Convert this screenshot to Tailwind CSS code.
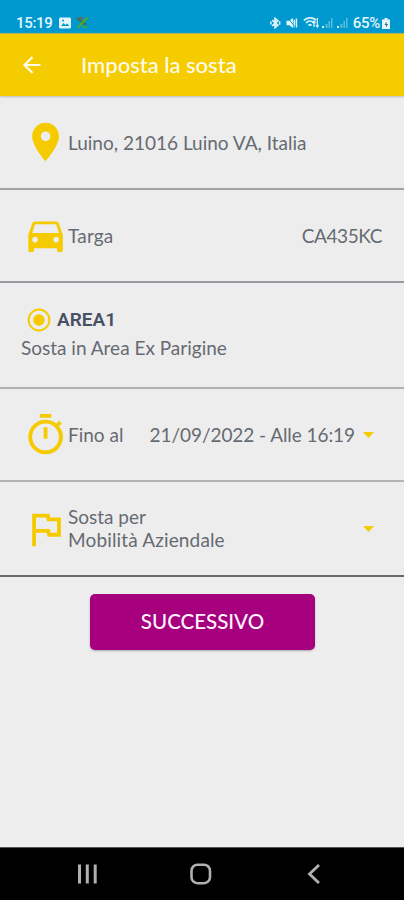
<!DOCTYPE html>
<html lang="it">
<head>
<meta charset="utf-8">
<meta name="viewport" content="width=device-width, initial-scale=1">
<title>Imposta la sosta</title>
<script src="https://cdn.jsdelivr.net/npm/@tailwindcss/browser@4"></script>
</head>
<body class="bg-[#ededed]">
<div class="flex h-[900px] w-[404px] flex-col overflow-hidden bg-[#ededed] font-['Lato',sans-serif] text-[19px] leading-[23px] text-[#666a72]">
  <div class="flex h-[33px] shrink-0 items-end bg-[#0099cf] pr-[14px] pb-[1px] pl-[16px] font-['Roboto',sans-serif] text-[15px] leading-[18px] font-medium text-[#e4f6fb]">
    <span class="tracking-[-0.3px]">15:19</span>
    <svg class="mb-[3px] ml-[6px] h-[12px] w-[12px]" viewBox="0 0 12 12"><rect y=".5" width="12" height="11" rx="1.5" fill="#e4f6fb"/><path d="M2 9l2.500-3 2 2 1.500-1.500L10.500 9z" fill="#0099cf"/><circle cx="4" cy="3.500" r="1" fill="#0099cf"/></svg>
    <svg class="mb-[3px] ml-[5px] h-[13px] w-[13px]" viewBox="0 0 13 13" fill="none" stroke-width="2.400"><path d="M1 2.500l5 3L10 9" stroke="#4a6d50"/><path d="M12 1.500L8 5 5 8l-3 4" stroke="#45a83b"/><path d="M3 2h4" stroke="#8b5347" stroke-width="1.600"/><path d="M6.500 11h4.500" stroke="#45a83b" stroke-width="1.800"/></svg>
    <div class="flex-1"></div>
    <svg class="mb-[3px] h-[12px] w-[11px]" viewBox="0 0 11 13" fill="none" stroke="#e4f6fb" stroke-width="1.800"><path d="M2 3.500l6 5.500-3 2.500V1.500L8 4 2 9.500"/><path d="M.5 5v3M10 4.500v4" stroke-width="1.600"/></svg>
    <svg class="mb-[3px] ml-[5px] h-[12px] w-[12px]" viewBox="0 0 12 13"><path d="M0 4h3l4-3v11L3 9H0z" fill="#e4f6fb"/><path d="M8.500 3v8M10.800 1.500v10" stroke="#e4f6fb" stroke-width="1.600"/><path d="M1 1l9 10" stroke="#0099cf" stroke-width="1"/></svg>
    <svg class="mb-[3px] ml-[5px] h-[13px] w-[16px]" viewBox="0 0 16 13" fill="none" stroke="#d6f0f7" stroke-width="1.700"><path d="M.8 4.500C4 1 9.500 1 13 4M3 7c2.500-2.500 5.500-2.500 7.500-.5M5.500 9.500c1-1 2-1 3 0"/><path d="M11 11V5m-1.500 2L11 5l1.500 2M14.300 2v9M13 9l1.300 2L15.600 9" stroke-width="1.300"/></svg>
    <svg class="mb-[3px] ml-[2px] h-[12px] w-[12px]" viewBox="0 0 12 12"><path d="M1 9h2v2H1z" fill="#d6f0f7"/><path d="M4.500 7h2v4h-2zM7.500 4h1.500v7H7.500zM10 1h1.500v10H10z" fill="#58bce0"/></svg>
    <svg class="mb-[3px] ml-[3px] h-[12px] w-[12px]" viewBox="0 0 12 12"><path d="M1 9h2v2H1z" fill="#d6f0f7"/><path d="M4.500 7h2v4h-2zM7.500 4h1.500v7H7.500zM10 1h1.500v10H10z" fill="#58bce0"/></svg>
    <span class="ml-[5px] tracking-[-0.300px]">65%</span>
    <svg class="mb-[3px] ml-[2px] h-[11px] w-[8px]" viewBox="0 0 8 11"><path d="M2.500 0h3v1.500H8V11H0V1.500h2.500z" fill="#e4f6fb"/><path d="M4.500 3.500L2.500 7h1.500v2.500L6 6H4.500z" fill="#32718c"/></svg>
  </div>

  <header class="flex h-[63px] shrink-0 items-center border-t border-[#a8b35a] bg-[#f5cc00] pl-[20px] text-white shadow-[0_1px_2px_#bbbbbb]">
    <svg class="h-[24px] w-[24px]" viewBox="0 0 24 24" fill="none" stroke="#fffbea" stroke-width="2.200"><path d="M20.500 12H4.500M12.500 4l-8 8 8 8"/></svg>
    <h1 class="ml-[37px] text-[22px] leading-[28px] font-medium text-[#fffbea]"><span>Imposta la sosta</span></h1>
  </header>

  <section class="flex h-[94px] shrink-0 items-center border-b-2 border-[#a0a2a5] pl-[22px]">
    <svg class="h-[46px] w-[46px]" viewBox="-.3 0 24 24" fill="#f5cb00"><path d="M12 2C8.130 2 5 5.130 5 9c0 5.250 7 13 7 13s7-7.750 7-13c0-3.870-3.130-7-7-7zm0 9.500a2.500 2.500 0 1 1 0-5 2.500 2.500 0 0 1 0 5z"/></svg>
    <span>Luino, 21016 Luino VA, Italia</span>
  </section>

  <section class="flex h-[93px] shrink-0 items-center border-b-2 border-[#96999d] pr-[22px] pl-[22px]">
    <svg class="h-[46px] w-[46px]" viewBox="-.3 -.4 24 24" fill="#f5cb00"><path d="M18.920 5.010C18.720 4.420 18.160 4 17.500 4h-11c-.66 0-1.210.42-1.420 1.010L3 11v8c0 .55.45 1 1 1h1c.55 0 1-.45 1-1v-1h12v1c0 .55.45 1 1 1h1c.55 0 1-.45 1-1v-8l-2.080-5.990zM6.500 15c-.83 0-1.500-.67-1.500-1.500S5.670 12 6.500 12s1.500.67 1.500 1.500S7.330 15 6.500 15zm11 0c-.83 0-1.500-.67-1.500-1.500s.67-1.500 1.500-1.500 1.500.67 1.500 1.500-.67 1.500-1.500 1.500zM5 10l1.500-4.500h11L19 10H5z"/></svg>
    <span class="tracking-[0.2px]">Targa</span>
    <span class="ml-auto tracking-[-0.4px]">CA435KC</span>
  </section>

  <section class="h-[106px] shrink-0 border-b-2 border-[#aeb0b2] pt-[24px] pl-[21px]">
    <div class="flex items-center pl-[6px]">
      <svg class="h-[24px] w-[24px]" viewBox="0 0 24 24"><circle cx="12" cy="12" r="10.400" fill="none" stroke="#f5cb00" stroke-width="2"/><circle cx="12" cy="12" r="5.800" fill="#f5cb00"/></svg>
      <span class="ml-[6px] font-['Roboto',sans-serif] text-[19px] leading-[26px] font-semibold text-[#485064]">AREA1</span>
    </div>
    <p class="mt-[3px]"><span>Sosta in Area Ex Parigine</span></p>
  </section>

  <section class="flex h-[93px] shrink-0 items-center border-b-2 border-[#b2b3b5] pr-[30px] pl-[22px]">
    <svg class="h-[46px] w-[46px]" viewBox="-.3 0 24 24" fill="#f5cb00"><path d="M15 1H9v2h6V1zm-4 13h2V8h-2v6zm8.030-6.610l1.420-1.420c-.43-.51-.9-.99-1.410-1.410l-1.420 1.420A8.962 8.962 0 0 0 12 4c-4.970 0-9 4.030-9 9s4.020 9 9 9a8.994 8.994 0 0 0 7.030-14.610zM12 20c-3.870 0-7-3.130-7-7s3.130-7 7-7 7 3.130 7 7-3.130 7-7 7z"/></svg>
    <span>Fino al</span>
    <span class="ml-auto tracking-[-0.07px]">21/09/2022 - Alle 16:19</span>
    <svg class="ml-[8px] h-[6px] w-[11px]" viewBox="0 0 11 6"><path d="M0 0h11L5.500 6z" fill="#f5cb00"/></svg>
  </section>

  <section class="flex h-[95px] shrink-0 items-center border-b-2 border-[#67696c] pr-[30px] pl-[22px]">
    <svg class="h-[46px] w-[46px]" viewBox="-.3 0 24 24" fill="#f5cb00"><path d="M12.360 6l.4 2H18v6h-3.360l-.4-2H7V6h5.360M14 4H5v17h2v-7h5.600l.4 2h7V6h-5.600L14 4z"/></svg>
    <div class="pb-[2px]"><span>Sosta per</span><br><span class="tracking-[0.150px]">Mobilità Aziendale</span></div>
    <svg class="ml-auto h-[6px] w-[11px]" viewBox="0 0 11 6"><path d="M0 0h11L5.500 6z" fill="#f5cb00"/></svg>
  </section>

  <button class="mt-[17px] ml-[90px] h-[56px] w-[225px] shrink-0 rounded-[5px] bg-[#a6007f] pb-[2px] text-[20.5px] font-medium text-[#fff4fc] shadow-[0_1px_2px_#aaaaaa]"><span>SUCCESSIVO</span></button>

  <nav class="mt-auto flex h-[53px] shrink-0 items-center border-t border-[#555555] bg-black pl-[77px]">
    <svg class="h-[20px] w-[20px]" viewBox="0 0 20 20" stroke="#b0b0b0" stroke-width="3"><path d="M2.500.5v19M10.300 .5v19M18.200 .5v19"/></svg>
    <svg class="ml-[93px] h-[22px] w-[22px]" viewBox="0 0 22 22"><rect x="1.500" y="1.700" width="18.500" height="18.500" rx="6" fill="none" stroke="#b0b0b0" stroke-width="2.600"/></svg>
    <svg class="ml-[95px] h-[20px] w-[14px]" viewBox="0 0 14 20" fill="none" stroke="#b0b0b0" stroke-width="2.800"><path d="M12 1L2.500 10l9.500 9"/></svg>
  </nav>
</div>
</body>
</html>
